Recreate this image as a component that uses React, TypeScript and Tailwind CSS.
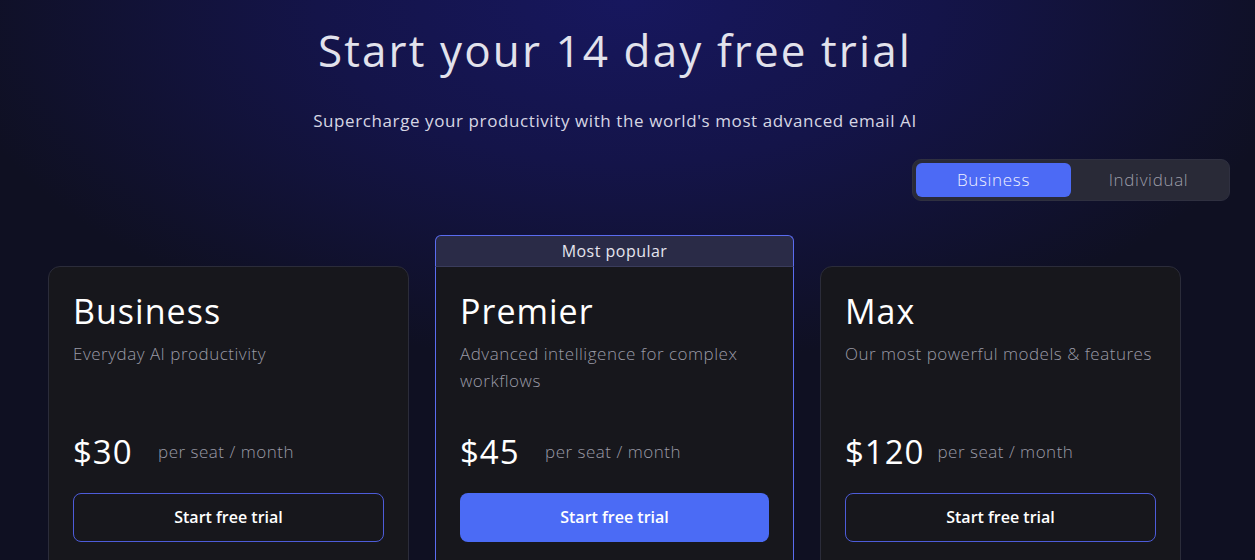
import React, { useState } from 'react';

type Plan = {
    name: string;
    desc: string;
    price: string;
    popular?: boolean;
};

const plans: Plan[] = [
    { name: 'Business', desc: 'Everyday AI productivity', price: '$30' },
    { name: 'Premier', desc: 'Advanced intelligence for complex workflows', price: '$45', popular: true },
    { name: 'Max', desc: 'Our most powerful models & features', price: '$120' },
];

function PlanCard({ plan }: { plan: Plan }) {
    return (
        <div className="flex flex-col">
            {plan.popular && (
                <div className="h-[31px] flex items-center justify-center bg-[#2a2b47] border border-b-0 border-[#5a6cf0] rounded-t-[6px] text-[16px] tracking-[0.03em] text-[#e4e4ee]">
                    Most popular
                </div>
            )}
            <div
                className={`flex-1 bg-[#17171c] px-[24px] pt-[22px] pb-[30px] ${
                    plan.popular
                        ? 'border border-t-[#3a3c5c] border-[#5a6cf0]'
                        : 'border border-[#2b2c3a] rounded-[12px]'
                }`}
            >
                <h2 className="text-[34px] leading-[44px] tracking-[0.03em] text-white">{plan.name}</h2>
                <p className="mt-[7px] h-[82px] text-[17px] leading-[27px] tracking-[0.03em] text-[#9a9aa6] font-light">
                    {plan.desc}
                </p>
                <div className="flex items-center gap-[13px] h-[60px]">
                    <span className="min-w-[72px] text-[33px] tracking-[0.03em] text-white">{plan.price}</span>
                    <span className="text-[17px] tracking-[0.03em] text-[#9a9aa6] font-light">per seat / month</span>
                </div>
                <button
                    className={`mt-[11px] w-full h-[49px] rounded-[8px] text-[16px] font-semibold text-white ${
                        plan.popular ? 'bg-[#4b6bf5]' : 'border border-[#4d5cd9] bg-transparent'
                    }`}
                >
                    Start free trial
                </button>
            </div>
        </div>
    );
}

export default function App() {
    const [mode, setMode] = useState<'business' | 'individual'>('business');

    return (
        <div
            className="min-h-screen h-[560px] overflow-hidden bg-[#0f1020] bg-[radial-gradient(ellipse_55%_65%_at_50%_0%,#17175e_0%,#141449_45%,#0f1022_100%)]"
            style={{ fontFamily: '"Open Sans", "Noto Sans", sans-serif' }}
        >
            <div className="w-[1230px]">
                <h1 className="pt-[22px] text-center text-[44px] leading-[56px] text-[#e2e2ec] tracking-[0.048em]">
                    Start your 14 day free trial
                </h1>
                <p className="mt-[30px] text-center text-[17px] text-[#d6d6e4] tracking-[0.035em]">
                    Supercharge your productivity with the world's most advanced email AI
                </p>

                <div className="mt-[25px] flex justify-end">
                    <div className="flex p-[3px] bg-[#292a37] border border-[#2f3040] rounded-[9px]">
                        <button
                            onClick={() => setMode('business')}
                            className={`w-[155px] h-[34px] rounded-[6px] text-[17px] tracking-[0.04em] font-light ${
                                mode === 'business' ? 'bg-[#4c6af5] text-[#eef0ff]' : 'text-[#9c9ca8]'
                            }`}
                        >
                            Business
                        </button>
                        <button
                            onClick={() => setMode('individual')}
                            className={`w-[155px] h-[34px] rounded-[6px] text-[17px] tracking-[0.04em] font-light ${
                                mode === 'individual' ? 'bg-[#4c6af5] text-[#eef0ff]' : 'text-[#9c9ca8]'
                            }`}
                        >
                            Individual
                        </button>
                    </div>
                </div>

                <div className="mt-[34px] pl-[48px] grid grid-cols-[361px_359px_361px] gap-[26px] items-end">
                    {plans.map((p) => (
                        <PlanCard key={p.name} plan={p} />
                    ))}
                </div>
            </div>
        </div>
    );
}
